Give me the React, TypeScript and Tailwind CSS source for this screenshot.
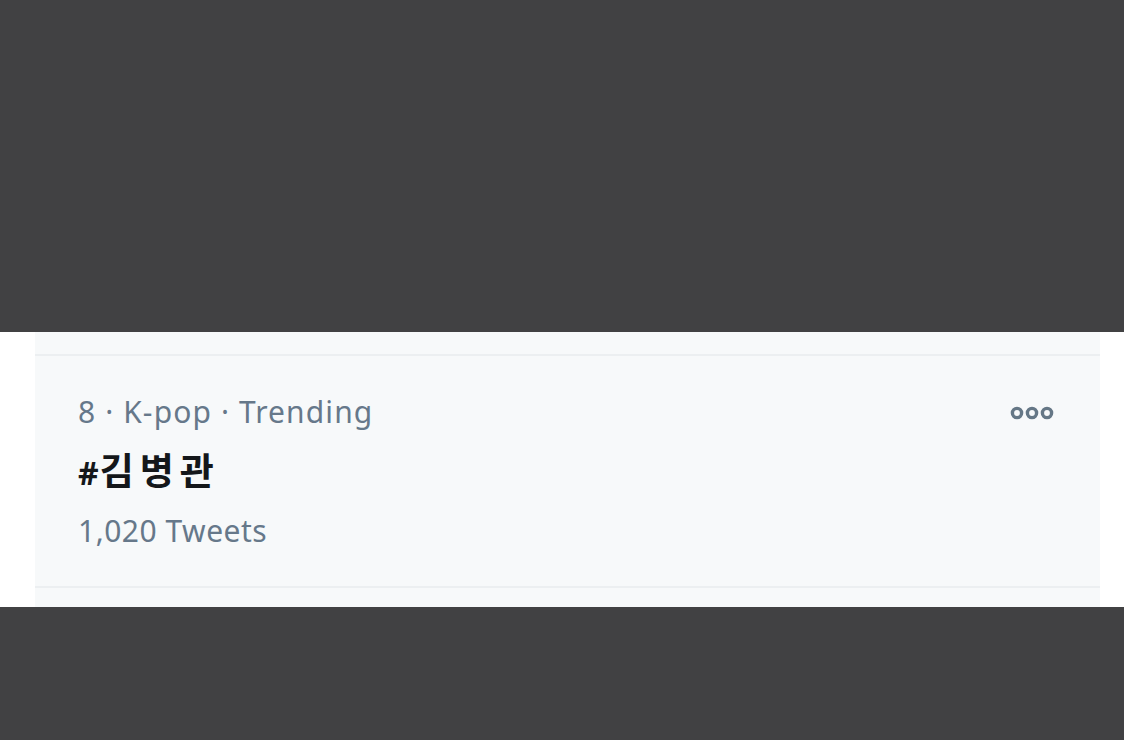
export default function App() {
  return (
    <div className="flex h-[740px] w-[1124px] flex-col bg-white font-['Noto_Sans','Noto_Sans_CJK_KR',sans-serif]">
      <div className="h-[332px] bg-[#414143]" />
      <div className="flex h-[275px]">
        <div className="w-[35px] bg-white" />
        <div className="flex flex-1 flex-col bg-[#f7f9fa]">
          <div className="h-[24px] border-b-2 border-[#eceff1]" />
          <div className="flex h-[232px] border-b-2 border-[#eceff1] pl-[43px] pr-[46px] pt-[36px]">
            <div className="flex flex-1 flex-col">
              <div className="h-[40px] text-[30px] leading-[40px] tracking-[1.1px] text-[#66788a]">
                8 · K-pop · Trending
              </div>
              <div className="mt-[19px] h-[40px] text-[37px] font-bold leading-[40px] tracking-[6px] text-[#14171a]">
                <span className="text-[32px] tracking-[1px]">#</span>김병관
              </div>
              <div className="mt-[20px] h-[40px] text-[30px] leading-[40px] tracking-[0.5px] text-[#66788a]">
                1,020 Tweets
              </div>
            </div>
            <button type="button" className="mt-[9px] h-[24px] text-[#657786]" aria-label="More">
              <svg width="44" height="14" viewBox="0 0 44 14" fill="none" stroke="currentColor" strokeWidth="3.4">
                <circle cx="7" cy="7" r="4.6" />
                <circle cx="22" cy="7" r="4.6" />
                <circle cx="37" cy="7" r="4.6" />
              </svg>
            </button>
          </div>
          <div className="flex-1" />
        </div>
        <div className="w-[24px] bg-white" />
      </div>
      <div className="flex-1 bg-[#414143]" />
    </div>
  );
}
